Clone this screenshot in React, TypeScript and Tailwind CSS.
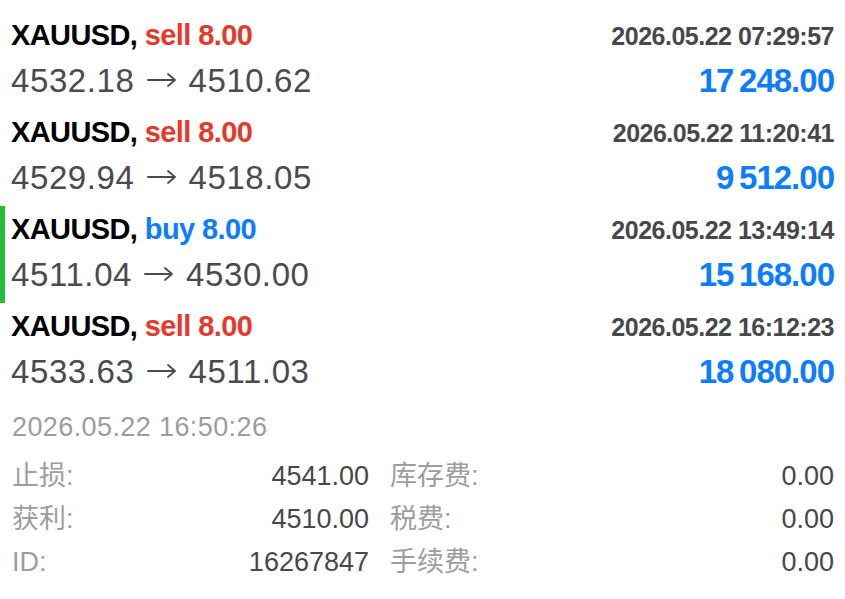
const trades = [
  { side: "sell", open: "4532.18", close: "4510.62", time: "2026.05.22 07:29:57", profit: "17\u2009248.00" },
  { side: "sell", open: "4529.94", close: "4518.05", time: "2026.05.22 11:20:41", profit: "9\u2009512.00" },
  { side: "buy", open: "4511.04", close: "4530.00", time: "2026.05.22 13:49:14", profit: "15\u2009168.00", active: true },
  { side: "sell", open: "4533.63", close: "4511.03", time: "2026.05.22 16:12:23", profit: "18\u2009080.00" },
];

const details = [
  ["止损:", "4541.00", "库存费:", "0.00"],
  ["获利:", "4510.00", "税费:", "0.00"],
  ["ID:", "16267847", "手续费:", "0.00"],
];

const Arrow = () => (
  <svg
    viewBox="0 0 30 16"
    className="mx-[12px] inline-block h-[16px] w-[30px] align-[4px]"
    fill="none"
    stroke="currentColor"
    strokeWidth={1.8}
    strokeLinecap="round"
    strokeLinejoin="round"
  >
    <path d="M1 8h27M21 2l7 6-7 6" />
  </svg>
);

export default function App() {
  return (
    <div className="min-h-screen bg-white pt-[12px] font-['Liberation_Sans','Noto_Sans_CJK_SC',sans-serif]">
      {trades.map((t, i) => (
        <div
          key={i}
          className={
            "h-[97px] pl-[11px] pr-[11px] " +
            (t.active ? "shadow-[inset_5px_0_0_#22c03a]" : "")
          }
        >
          <div className="flex h-[47px] items-baseline justify-between leading-[47px]">
            <span className="text-[29px] font-bold tracking-[-0.6px] text-black">
              XAUUSD,{" "}
              <span className={t.side === "sell" ? "text-[#e6392b]" : "text-[#0b7dfe]"}>
                {t.side} 8.00
              </span>
            </span>
            <span className="text-[25px] font-bold tracking-[-0.5px] text-[#48484c]">{t.time}</span>
          </div>
          <div className="flex h-[44px] items-baseline justify-between leading-[44px]">
            <span className="text-[33px] tracking-[0.6px] text-[#4a4a50]">
              {t.open}
              <Arrow />
              {t.close}
            </span>
            <span className="text-[33px] font-bold tracking-[-1px] text-[#0b7dfe]">{t.profit}</span>
          </div>
        </div>
      ))}

      <div className="px-[12px] pr-[11px]">
        <div className="text-[27px] leading-[55px] tracking-[0.4px] text-[#9d9da1]">2026.05.22 16:50:26</div>
        {details.map((d, i) => (
          <div key={i} className="grid grid-cols-[357px_1fr] gap-x-[21px] text-[27px] leading-[43px]">
            <div className="flex justify-between">
              <span className="text-[#9d9da1]">{d[0]}</span>
              <span className="text-[#48484c]">{d[1]}</span>
            </div>
            <div className="flex justify-between">
              <span className="text-[#9d9da1]">{d[2]}</span>
              <span className="text-[#48484c]">{d[3]}</span>
            </div>
          </div>
        ))}
      </div>
    </div>
  );
}
